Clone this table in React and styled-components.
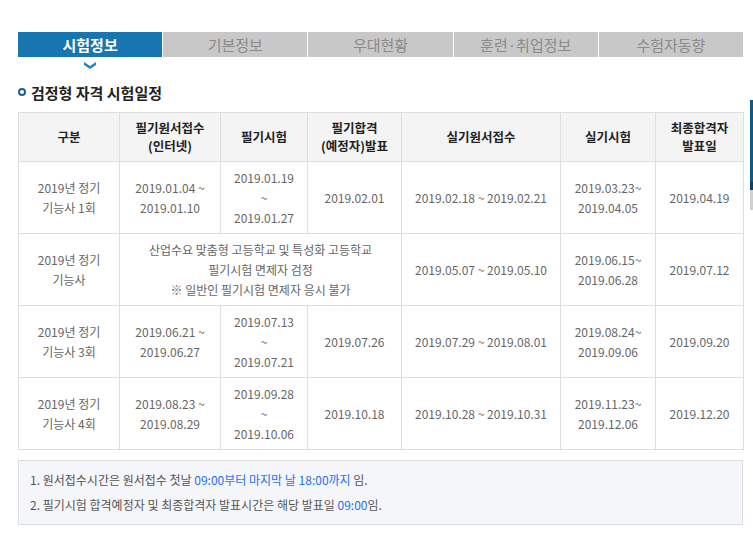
import React from "react";
import styled, { createGlobalStyle } from "styled-components";

const GlobalStyle = createGlobalStyle`
  html, body {
    margin: 0;
    padding: 0;
    background: #fff;
    font-family: "Noto Sans CJK KR", "Noto Sans", sans-serif;
  }
`;

const tabs = ["시험정보", "기본정보", "우대현황", "훈련·취업정보", "수험자동향"];

const rows = [
  {
    name: ["2019년 정기", "기능사 1회"],
    apply: ["2019.01.04 ~", "2019.01.10"],
    exam: ["2019.01.19", "~", "2019.01.27"],
    pass: "2019.02.01",
    practApply: "2019.02.18 ~ 2019.02.21",
    pract: ["2019.03.23~", "2019.04.05"],
    final: "2019.04.19",
  },
  {
    name: ["2019년 정기", "기능사"],
    exempt: [
      "산업수요 맞춤형 고등학교 및 특성화 고등학교",
      "필기시험 면제자 검정",
      "※ 일반인 필기시험 면제자 응시 불가",
    ],
    practApply: "2019.05.07 ~ 2019.05.10",
    pract: ["2019.06.15~", "2019.06.28"],
    final: "2019.07.12",
  },
  {
    name: ["2019년 정기", "기능사 3회"],
    apply: ["2019.06.21 ~", "2019.06.27"],
    exam: ["2019.07.13", "~", "2019.07.21"],
    pass: "2019.07.26",
    practApply: "2019.07.29 ~ 2019.08.01",
    pract: ["2019.08.24~", "2019.09.06"],
    final: "2019.09.20",
  },
  {
    name: ["2019년 정기", "기능사 4회"],
    apply: ["2019.08.23 ~", "2019.08.29"],
    exam: ["2019.09.28", "~", "2019.10.06"],
    pass: "2019.10.18",
    practApply: "2019.10.28 ~ 2019.10.31",
    pract: ["2019.11.23~", "2019.12.06"],
    final: "2019.12.20",
  },
];

const colWidths = [101, 101, 87, 94, 159, 95, 88];

function Lines({ items }) {
  return items.map((t, i) => (
    <React.Fragment key={i}>
      {i > 0 && <br />}
      {t}
    </React.Fragment>
  ));
}

export default function App() {
  return (
    <>
      <GlobalStyle />
      <Page>
        <TabBar>
          {tabs.map((t, i) => (
            <Tab key={t} $active={i === 0}>
              {t}
              {i === 0 && (
                <Chevron viewBox="0 0 12 7">
                  <path d="M0 0 L6 4 L12 0 L12 3 L6 7 L0 3 Z" fill="#1a87c9" />
                </Chevron>
              )}
            </Tab>
          ))}
        </TabBar>

        <Heading>
          <Bullet />
          검정형 자격 시험일정
        </Heading>

        <Table>
          <colgroup>
            {colWidths.map((w, i) => (
              <col key={i} style={{ width: w }} />
            ))}
          </colgroup>
          <thead>
            <tr>
              <Th>구분</Th>
              <Th>필기원서접수<br />(인터넷)</Th>
              <Th>필기시험</Th>
              <Th>필기합격<br />(예정자)발표</Th>
              <Th>실기원서접수</Th>
              <Th>실기시험</Th>
              <Th>최종합격자<br />발표일</Th>
            </tr>
          </thead>
          <tbody>
            {rows.map((r, i) => (
              <tr key={i}>
                <Td><Lines items={r.name} /></Td>
                {r.exempt ? (
                  <Td colSpan={3}><Lines items={r.exempt} /></Td>
                ) : (
                  <>
                    <Td><Lines items={r.apply} /></Td>
                    <Td><Lines items={r.exam} /></Td>
                    <Td>{r.pass}</Td>
                  </>
                )}
                <Td>{r.practApply}</Td>
                <Td><Lines items={r.pract} /></Td>
                <Td>{r.final}</Td>
              </tr>
            ))}
          </tbody>
        </Table>

        <NoteBox>
          <Note>
            1. 원서접수시간은 원서접수 첫날 <Blue>09:00부터 마지막 날 18:00까지</Blue> 임.
          </Note>
          <Note>
            2. 필기시험 합격예정자 및 최종합격자 발표시간은 해당 발표일 <Blue>09:00</Blue>임.
          </Note>
        </NoteBox>
      </Page>
      <SideBar />
    </>
  );
}

// ===== Styles =====

const Page = styled.div`
  width: 725px;
  padding: 32px 0 0 18px;
`;

const TabBar = styled.div`
  display: flex;
  gap: 1px;
`;

const Tab = styled.div`
  position: relative;
  flex: 1;
  height: 25px;
  line-height: 25px;
  text-align: center;
  font-size: 15px;
  font-weight: ${(p) => (p.$active ? 700 : 400)};
  color: ${(p) => (p.$active ? "#fff" : "#8a8a8a")};
  background: ${(p) => (p.$active ? "#1776b0" : "#c8c8c8")};
`;

const Chevron = styled.svg`
  position: absolute;
  left: 66px;
  top: 30px;
  width: 12px;
  height: 7px;
`;

const Heading = styled.h2`
  display: flex;
  align-items: center;
  gap: 5px;
  margin: 24px 0 0 0;
  height: 22px;
  font-size: 15px;
  font-weight: 700;
  color: #222;
`;

const Bullet = styled.span`
  width: 4px;
  height: 4px;
  border: 2px solid #1a5f96;
  border-radius: 50%;
`;

const Table = styled.table`
  margin-top: 9px;
  width: 725px;
  border-collapse: collapse;
  table-layout: fixed;
`;

const Th = styled.th`
  height: 48px;
  padding: 0;
  border: 1px solid #dedede;
  background: #f4f4f4;
  font-size: 12.5px;
  font-weight: 700;
  line-height: 18.5px;
  color: #222;
  text-align: center;
  vertical-align: middle;
`;

const Td = styled.td`
  height: 71px;
  padding: 0;
  border: 1px solid #dedede;
  font-size: 12px;
  line-height: 20px;
  color: #666;
  text-align: center;
  vertical-align: middle;
`;

const NoteBox = styled.div`
  margin-top: 10px;
  padding: 6px 11px 7px;
  border: 1px solid #dcdde0;
  background: #f5f6f9;
`;

const Note = styled.p`
  margin: 0;
  font-size: 12px;
  line-height: 25px;
  color: #555;
`;

const Blue = styled.span`
  color: #1f6ff2;
`;

const SideBar = styled.div`
  position: absolute;
  right: 0;
  top: 100px;
  width: 3px;
  height: 110px;
  background: linear-gradient(
    to bottom,
    #0d5a87 0px,
    #0d5a87 82px,
    #08435f 82px,
    #08435f 90px,
    #d0d0d0 90px
  );
`;
